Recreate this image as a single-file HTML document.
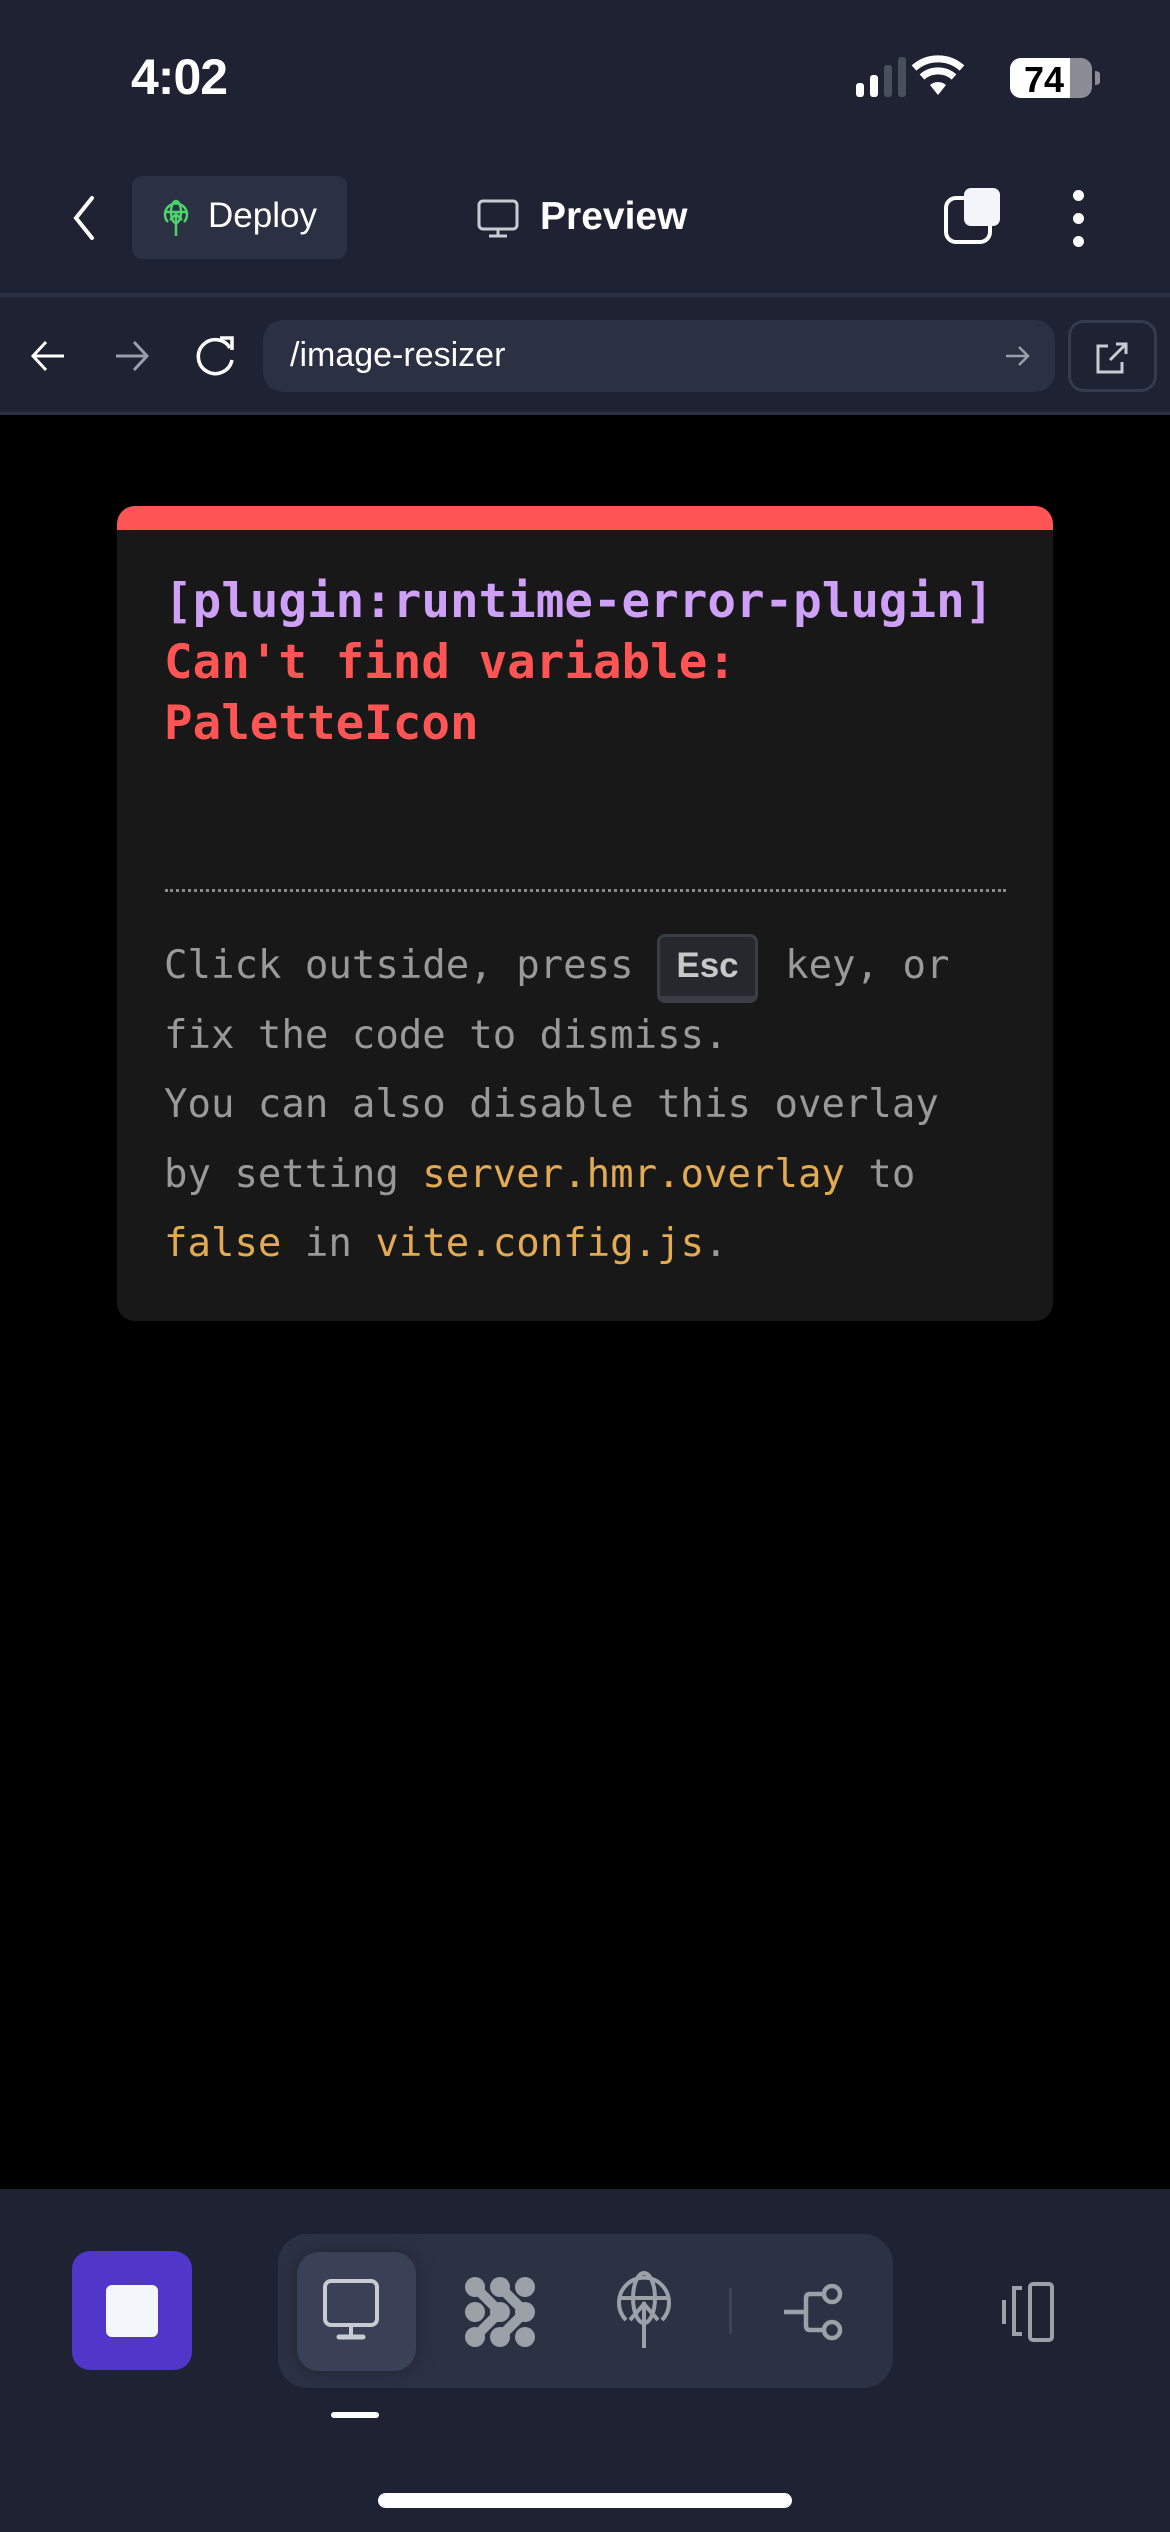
<!DOCTYPE html>
<html><head><meta charset="utf-8"><style>
*{margin:0;padding:0;box-sizing:border-box}
body{width:1170px;height:2532px;background:#000;position:relative;overflow:hidden;font-family:"Liberation Sans",sans-serif}
.abs{position:absolute}
.mono{font-family:"DejaVu Sans Mono","Liberation Mono",monospace}
</style></head><body>
<div class="abs" style="left:0;top:0;width:1170px;height:415px;background:#1e2232"></div>
<div class="abs" style="left:0;top:293px;width:1170px;height:4px;background:#2b3043"></div>
<div class="abs" style="left:0;top:412px;width:1170px;height:3px;background:#2b3043"></div>
<!-- status bar -->
<div class="abs" style="left:131px;top:48px;font-size:50px;font-weight:bold;color:#fff;letter-spacing:-1px">4:02</div>
<svg class="abs" style="left:850px;top:55px" width="250" height="46">
<rect x="6" y="28" width="8" height="14" rx="3" fill="#fff"/>
<rect x="20" y="20" width="8" height="22" rx="3" fill="#fff"/>
<rect x="34" y="10" width="8" height="32" rx="3" fill="#4a4f5e"/>
<rect x="48" y="2" width="8" height="40" rx="3" fill="#4a4f5e"/>
<path d="M88 40 L80 30 A12 12 0 0 1 96 30 Z" fill="#fff"/>
<path d="M72 22 A24 24 0 0 1 104 22" stroke="#fff" stroke-width="7" fill="none"/>
<path d="M64 13 A36 36 0 0 1 112 13" stroke="#fff" stroke-width="7" fill="none"/>
<rect x="160" y="3" width="82" height="40" rx="11" fill="#8a8d96"/>
<path d="M171 3 H220 V43 H171 A11 11 0 0 1 160 32 V14 A11 11 0 0 1 171 3Z" fill="#fff"/>
<path d="M245 16 A6 6 0 0 1 245 30Z" fill="#8a8d96"/>
<text x="194" y="37" font-family="Liberation Sans" font-weight="bold" font-size="36" fill="#000" text-anchor="middle">74</text>
</svg>
<!-- header -->
<svg class="abs" style="left:66px;top:194px" width="36" height="48"><path d="M26 4 L10 24 L26 44" stroke="#fff" stroke-width="4" fill="none" stroke-linecap="round"/></svg>
<div class="abs" style="left:132px;top:176px;width:215px;height:83px;background:#2b3043;border-radius:10px"></div>
<svg class="abs" style="left:160px;top:198px" width="32" height="40" viewBox="0 0 32 40"><g stroke="#4ed26b" stroke-width="2.5" fill="none"><path d="M8 24 A11 11 0 1 1 24 24"/><ellipse cx="16" cy="14" rx="5" ry="11"/><line x1="5" y1="14" x2="27" y2="14"/><line x1="16" y1="16" x2="16" y2="38"/><path d="M10 22 L16 16 L22 22"/></g></svg>
<div class="abs" style="left:208px;top:196px;font-size:35px;color:#fff">Deploy</div>
<svg class="abs" style="left:476px;top:198px" width="46" height="42"><rect x="3" y="3" width="38" height="28" rx="4" stroke="#c8ccd2" stroke-width="3" fill="none"/><line x1="22" y1="31" x2="22" y2="38" stroke="#c8ccd2" stroke-width="3"/><line x1="13" y1="38" x2="31" y2="38" stroke="#c8ccd2" stroke-width="3"/></svg>
<div class="abs" style="left:540px;top:195px;font-size:39px;font-weight:bold;color:#fff">Preview</div>
<svg class="abs" style="left:940px;top:186px" width="70" height="62"><rect x="6" y="12" width="44" height="44" rx="10" stroke="#fff" stroke-width="4" fill="#1e2232"/><rect x="24" y="2" width="36" height="38" rx="7" fill="#f2f5fa"/></svg>
<div class="abs" style="left:1073px;top:190px;width:11px;height:11px;border-radius:50%;background:#fff"></div>
<div class="abs" style="left:1073px;top:213px;width:11px;height:11px;border-radius:50%;background:#fff"></div>
<div class="abs" style="left:1073px;top:236px;width:11px;height:11px;border-radius:50%;background:#fff"></div>
<!-- url row -->
<svg class="abs" style="left:28px;top:336px" width="40" height="40"><path d="M36 20 H6 M18 6 L5 20 L18 34" stroke="#fff" stroke-width="3" fill="none"/></svg>
<svg class="abs" style="left:112px;top:336px" width="40" height="40"><path d="M4 20 H34 M22 6 L35 20 L22 34" stroke="#9a9ea6" stroke-width="3" fill="none"/></svg>
<svg class="abs" style="left:192px;top:334px" width="50" height="44"><path d="M38 14 A17 17 0 1 0 40 26" stroke="#fff" stroke-width="3.5" fill="none"/><path d="M28 4 H40 V16" stroke="#fff" stroke-width="3.5" fill="none"/></svg>
<div class="abs" style="left:263px;top:320px;width:792px;height:72px;background:#2b3043;border-radius:20px"></div>
<div class="abs" style="left:290px;top:336px;font-size:34px;color:#fff">/image-resizer</div>
<svg class="abs" style="left:1004px;top:342px" width="28" height="28"><path d="M2 14 H24 M15 5 L24 14 L15 23" stroke="#9a9ea6" stroke-width="2.5" fill="none"/></svg>
<div class="abs" style="left:1068px;top:320px;width:89px;height:72px;border:3px solid #353a4c;border-radius:16px"></div>
<svg class="abs" style="left:1094px;top:340px" width="36" height="36"><path d="M14 6 H4 V32 H28 V22" stroke="#c8ccd2" stroke-width="3" fill="none"/><path d="M16 20 L32 4 M22 4 H32 V14" stroke="#c8ccd2" stroke-width="3" fill="none"/></svg>
<!-- card -->
<div class="abs" style="left:117px;top:506px;width:936px;height:815px;background:#181818;border-radius:18px;overflow:hidden;box-shadow:0 0 60px rgba(0,0,0,.6)">
<div style="height:24px;background:#ff5555"></div>
</div>
<div class="abs mono" style="left:164px;top:571px;font-size:47.5px;font-weight:bold;line-height:61px;white-space:pre"><span style="color:#cfa0f7">[plugin:runtime-error-plugin]</span>
<span style="color:#ff5555">Can't find variable:
PaletteIcon</span></div>
<div class="abs" style="left:165px;top:889px;width:841px;border-top:3px dotted #8a8a8a"></div>
<div class="abs" style="left:657px;top:934px;width:101px;height:69px;background:#26282e;border:3px solid #3b3d44;border-bottom-width:7px;border-radius:8px;color:#c8c8c8;font-weight:bold;font-size:35px;text-align:center;line-height:58px">Esc</div>
<div class="abs mono" style="left:164px;top:931px;font-size:39px;line-height:69.5px;color:#999;white-space:pre">Click outside, press <span style="display:inline-block;width:128px"></span>key, or
fix the code to dismiss.
You can also disable this overlay
by setting <span style="color:#e2aa53">server.hmr.overlay</span> to
<span style="color:#e2aa53">false</span> in <span style="color:#e2aa53">vite.config.js</span>.</div>
<!-- bottom bar -->
<div class="abs" style="left:0;top:2189px;width:1170px;height:343px;background:#1e2232"></div>
<div class="abs" style="left:72px;top:2251px;width:120px;height:119px;background:#5036c9;border-radius:18px"></div>
<div class="abs" style="left:106px;top:2285px;width:52px;height:52px;background:#f3f7fc;border-radius:6px"></div>
<div class="abs" style="left:278px;top:2234px;width:615px;height:154px;background:#2c3144;border-radius:30px"></div>
<div class="abs" style="left:297px;top:2252px;width:119px;height:119px;background:#3a4055;border-radius:22px;box-shadow:0 0 20px rgba(0,0,0,.25)"></div>
<svg class="abs" style="left:320px;top:2278px" width="76" height="66"><rect x="5" y="3" width="52" height="44" rx="6" stroke="#c8ccd2" stroke-width="4" fill="none"/><line x1="31" y1="47" x2="31" y2="58" stroke="#c8ccd2" stroke-width="4"/><line x1="19" y1="59" x2="43" y2="59" stroke="#c8ccd2" stroke-width="5" stroke-linecap="round"/></svg>
<svg class="abs" style="left:460px;top:2272px" width="80" height="80"><g fill="#9ca1a8"><circle cx="15" cy="15" r="10"/><circle cx="40" cy="15" r="10"/><circle cx="65" cy="15" r="10"/><circle cx="15" cy="40" r="10"/><circle cx="40" cy="40" r="10"/><circle cx="65" cy="40" r="10"/><circle cx="15" cy="65" r="10"/><circle cx="40" cy="65" r="10"/><circle cx="65" cy="65" r="10"/></g><g stroke="#9ca1a8" stroke-width="10" stroke-linecap="round" fill="none"><path d="M15 15 L40 40 L15 65"/><path d="M40 15 L65 40 L40 65"/></g></svg>
<svg class="abs" style="left:612px;top:2268px" width="64" height="86"><g stroke="#9ca1a8" stroke-width="4" fill="none"><path d="M14 52 A25 25 0 1 1 50 52"/><ellipse cx="32" cy="30" rx="11" ry="25"/><line x1="7" y1="30" x2="57" y2="30"/><line x1="32" y1="34" x2="32" y2="80"/><path d="M18 52 L32 36 L46 52"/></g></svg>
<div class="abs" style="left:729px;top:2288px;width:3px;height:46px;background:#3d4357"></div>
<svg class="abs" style="left:782px;top:2280px" width="66" height="66"><g stroke="#9ca1a8" stroke-width="4.5" fill="none"><line x1="2" y1="32" x2="24" y2="32"/><path d="M42 14 H28 Q24 14 24 18 V46 Q24 50 28 50 H42"/><circle cx="50" cy="14" r="8"/><circle cx="50" cy="50" r="8"/></g></svg>
<svg class="abs" style="left:1000px;top:2280px" width="76" height="64"><g stroke="#9ca1a8" stroke-width="4" fill="none"><line x1="4" y1="20" x2="4" y2="44"/><path d="M22 8 H14 V54 H22"/><rect x="30" y="4" width="22" height="56" rx="3"/></g></svg>
<div class="abs" style="left:331px;top:2412px;width:48px;height:6px;background:#fff;border-radius:3px"></div>
<div class="abs" style="left:378px;top:2493px;width:414px;height:15px;background:#fff;border-radius:8px"></div>
</body></html>
